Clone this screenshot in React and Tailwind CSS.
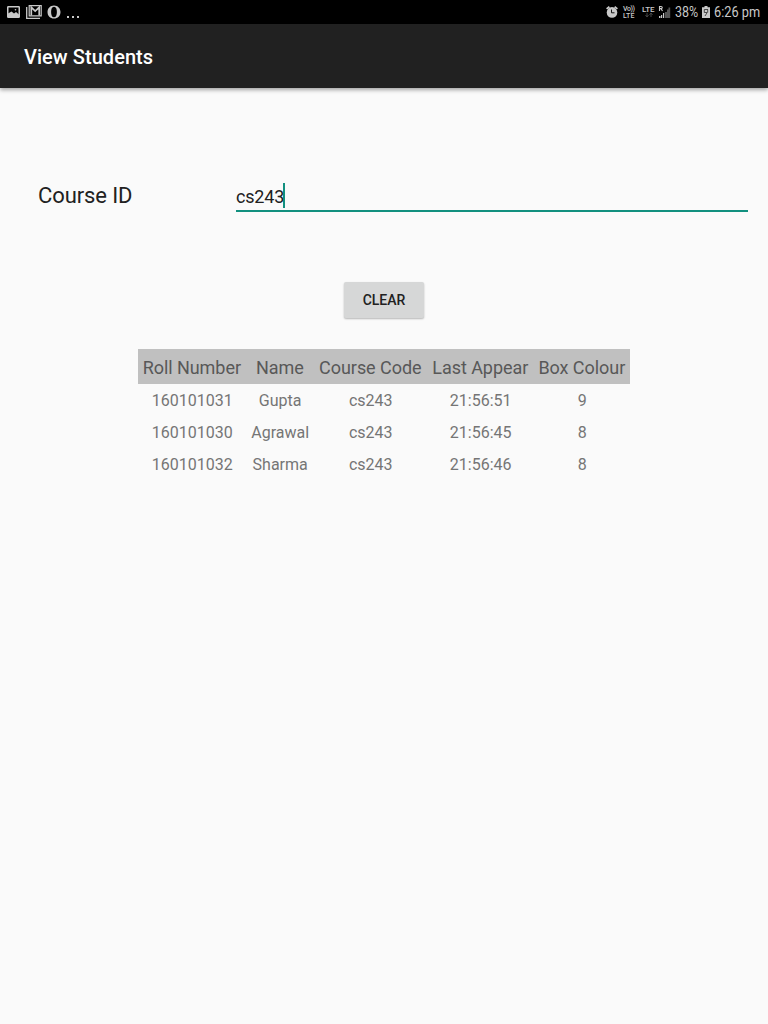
const columns = [
  { title: "Roll Number", width: "w-[108px]" },
  { title: "Name", width: "w-[68px]" },
  { title: "Course Code", width: "w-[113px]" },
  { title: "Last Appear", width: "w-[107px]" },
  { title: "Box Colour", width: "w-[96px]" },
];

const students = [
  ["160101031", "Gupta", "cs243", "21:56:51", "9"],
  ["160101030", "Agrawal", "cs243", "21:56:45", "8"],
  ["160101032", "Sharma", "cs243", "21:56:46", "8"],
];

function PictureIcon() {
  return (
    <svg className="block h-[12px] w-[13px]" viewBox="0 0 13 12">
      <rect x="0.75" y="0.75" width="11.5" height="10.5" rx="0.6" fill="none" stroke="#c9c9c9" strokeWidth="1.5" />
      <path fill="#c9c9c9" d="M1 7.500 4.500 5.500 7 7.500 9 6l3 2.500V11H1Z" />
      <circle cx="8.500" cy="3.800" r="0.800" fill="#c9c9c9" />
    </svg>
  );
}

function MailIcon() {
  return (
    <svg className="block h-[14px] w-[16px]" viewBox="0 0 16 14">
      <path fill="none" stroke="#c9c9c9" strokeWidth="1.3" d="M.7 2v11.3H14" />
      <path fill="none" stroke="#c9c9c9" strokeWidth="1.2" d="M3.200.7h12v10.200h-12Z" />
      <path fill="none" stroke="#c9c9c9" strokeWidth="1.700" d="M5.300 10.500V2.300l3.900 3.700L13.200 2.300v8.200" />
    </svg>
  );
}

function OperaIcon() {
  return (
    <svg className="block h-[14px] w-[14px]" viewBox="0 0 14 14">
      <path fill="#c9c9c9" fillRule="evenodd" d="M7 .4c3.800 0 6.500 2.800 6.500 6.600S10.800 13.600 7 13.600.5 10.800.5 7 3.200.4 7 .4Zm0 1.300C4.900 1.700 4.100 4 4.100 7s.8 5.300 2.900 5.300S9.900 10 9.900 7 9.100 1.700 7 1.700Z" />
    </svg>
  );
}

function AlarmIcon() {
  return (
    <svg className="block h-[12px] w-[12px]" viewBox="0 0 12 12">
      <path fill="none" stroke="#c9c9c9" strokeWidth="1.8" d="M.6 2.900 3.400.7M8.600.7l2.800 2.200" />
      <circle cx="6" cy="6.400" r="5.300" fill="#c9c9c9" />
      <path fill="none" stroke="#161616" strokeWidth="1" d="M5.500 3.500v3.300h3" />
    </svg>
  );
}

function SignalIcon() {
  return (
    <svg className="block h-[14px] w-[13px]" viewBox="0 0 13 14">
      <path fill="#565656" d="M7 7h2v6H7ZM9 4.500h1.600v8.500H9ZM10.500 2.500h1.700V13h-1.700Z" />
      <path fill="#c9c9c9" d="M1 11h1.500v2H1ZM3 10h1.200v3H3ZM5 8h1.200v5H5Z" />
      <path fill="none" stroke="#c9c9c9" strokeWidth="1.1" d="M1.500 6V1.500h1.500c1.700 0 1.700 2.100 0 2.100H1.500M3 3.600 4.500 6" />
    </svg>
  );
}

function BatteryIcon() {
  return (
    <svg className="block h-[13px] w-[8px]" viewBox="0 0 8 13">
      <path fill="#c9c9c9" d="M2.500 0h3v1.300H8V12H0V1.300h2.500Z" />
      <path fill="none" stroke="#393939" strokeWidth="0.900" d="M6 3.500H2.300v3h2.900L3 10M5.700 3.500v3" />
    </svg>
  );
}

function StatusBar() {
  return (
    <div className="flex h-6 items-start justify-between bg-black text-[#c9c9c9]">
      <div className="flex pl-[7px] pt-[5px]">
        <div className="mt-px"><PictureIcon /></div>
        <div className="ml-[6px]"><MailIcon /></div>
        <div className="ml-[5px]"><OperaIcon /></div>
        <div className="ml-[6px] mt-[11px] flex gap-[3px]">
          <i className="size-[2px] bg-[#c9c9c9]" />
          <i className="size-[2px] bg-[#c9c9c9]" />
          <i className="size-[2px] bg-[#c9c9c9]" />
        </div>
      </div>
      <div className="flex w-[162px]">
        <div className="mt-[6px]"><AlarmIcon /></div>
        <div className="ml-[5px] mt-[6px] w-[14px] text-[7px] leading-[6.5px] font-medium whitespace-nowrap">
          <div className="tracking-[-0.4px]">Vo))</div>
          <div className="tracking-[0.1px]">LTE</div>
        </div>
        <div className="ml-[5px] mt-[6px] w-[14px] text-[8px] leading-[7px] font-medium tracking-[-0.1px]">
          <div>LTE</div>
          <svg className="ml-[3px] block h-[5px] w-[8px]" viewBox="0 0 8 5">
            <path d="M2 0v4M.5 2 2 4l1.500-2M6 4V0M4.500 2 6 0l1.500 2" stroke="#444444" fill="none" />
          </svg>
        </div>
        <div className="ml-[2px] mt-[5px]"><SignalIcon /></div>
        <div className="ml-[4px] w-[24px] pt-px text-[14.5px] leading-6 whitespace-nowrap">
          <span className="inline-block origin-left scale-x-[0.86]">38%</span>
        </div>
        <div className="ml-[3px] mt-[6px]"><BatteryIcon /></div>
        <div className="ml-[4px] w-[46px] pt-px text-[14.5px] leading-6 whitespace-nowrap">
          <span className="inline-block origin-left scale-x-[0.88]">6:26 pm</span>
        </div>
      </div>
    </div>
  );
}

export default function App() {
  return (
    <div className="flex h-screen min-h-[1024px] w-[768px] flex-col overflow-hidden bg-[#fafafa] font-[Roboto,sans-serif]">
      <StatusBar />
      <header className="flex h-16 items-center bg-[#212121] px-6 pt-[2px] shadow-[0_2px_4px_rgba(0,0,0,0.35)]">
        <h1 className="text-[20px] font-medium leading-6 tracking-[0.05px] text-white">View Students</h1>
      </header>
      <main className="flex flex-col">
        <div className="flex h-[124px] items-end pl-[38px] pr-5">
          <label htmlFor="course" className="w-[198px] pb-[3px] text-[22px] leading-[26px] tracking-[-0.1px] text-[#212121]">Course ID</label>
          <div id="course" className="flex h-[29px] flex-1 items-start border-b-2 border-[#12907f] text-[18px] leading-[28px] text-[#212121]">
            <span className="w-[48px] tracking-[-0.2px]">cs243</span>
            <span className="-ml-px h-[25px] w-[2px] bg-[#12907f]" />
          </div>
        </div>
        <button className="mt-[70px] h-9 w-20 self-center rounded-[2px] bg-[#d6d7d7] text-[14px] font-medium text-[#212121] shadow-[0_1px_2px_rgba(0,0,0,0.28)]">CLEAR</button>
        <div className="mt-[31px] self-center text-center">
          <div className="flex h-[35px] bg-[#c0c0c0] pt-[3px] text-[18px] leading-8 tracking-[-0.05px] text-[#585858]">
            {columns.map((column) => (
              <div key={column.title} className={`${column.width} whitespace-nowrap`}>{column.title}</div>
            ))}
          </div>
          {students.map((student) => (
            <div key={student[0]} className="flex h-8 pl-[0.4px] text-[16px] leading-[33px] text-[#757575]">
              {student.map((value, i) => (
                <div key={columns[i].title} className={columns[i].width}>{value}</div>
              ))}
            </div>
          ))}
        </div>
      </main>
    </div>
  );
}
